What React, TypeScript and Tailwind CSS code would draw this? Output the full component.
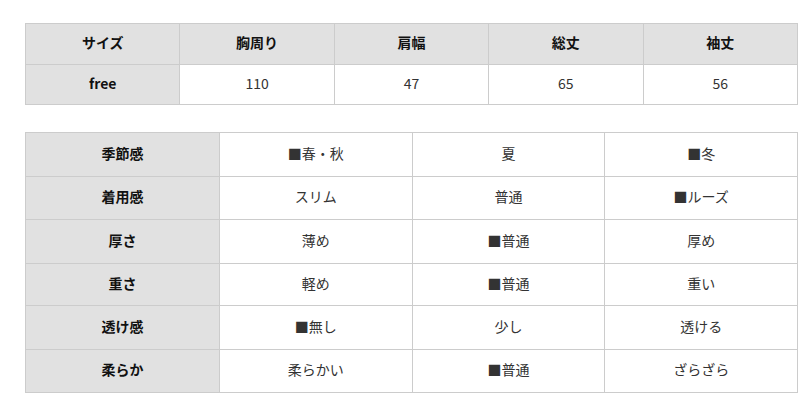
const sizeHead = ["サイズ", "胸周り", "肩幅", "総丈", "袖丈"]
const sizeRow = ["free", "110", "47", "65", "56"]

const feelRows: { label: string; values: string[]; h: string }[] = [
  { label: "季節感", values: ["■春・秋", "夏", "■冬"], h: "h-[44px]" },
  { label: "着用感", values: ["スリム", "普通", "■ルーズ"], h: "h-[43px]" },
  { label: "厚さ", values: ["薄め", "■普通", "厚め"], h: "h-[44px]" },
  { label: "重さ", values: ["軽め", "■普通", "重い"], h: "h-[42px]" },
  { label: "透け感", values: ["■無し", "少し", "透ける"], h: "h-[44px]" },
  { label: "柔らか", values: ["柔らかい", "■普通", "ざらざら"], h: "h-[43px]" },
]

export default function App() {
  return (
    <div
      className="w-[812px] h-[408px] bg-white pl-[25px] pt-[23px]"
      style={{ fontFamily: '"Noto Sans CJK JP", "Noto Sans", sans-serif' }}
    >
      {/* Size table */}
      <table className="w-[773px] table-fixed border-collapse text-[14px]">
        <tbody>
          <tr className="h-[41px]">
            {sizeHead.map((t) => (
              <th key={t} className="border border-[#cccccc] bg-[#e1e1e1] pb-[4px] font-bold text-center text-[#111]">
                {t}
              </th>
            ))}
          </tr>
          <tr className="h-[40px]">
            {sizeRow.map((t, i) => (
              <td
                key={i}
                className={`border border-[#cccccc] pb-[3px] text-center ${i === 0 ? "bg-[#e1e1e1] font-bold text-[#111]" : "bg-white text-[#333]"}`}
              >
                {t}
              </td>
            ))}
          </tr>
        </tbody>
      </table>

      {/* Feel table */}
      <table className="mt-[27px] w-[773px] table-fixed border-collapse text-[14px]">
        <tbody>
          {feelRows.map((r) => (
            <tr key={r.label} className={r.h}>
              <th className="w-[194px] border border-[#cccccc] bg-[#e1e1e1] pb-[3px] font-bold text-center text-[#111]">
                {r.label}
              </th>
              {r.values.map((v, i) => (
                <td key={i} className="border border-[#cccccc] bg-white pb-[3px] text-center text-[#333]">
                  {v}
                </td>
              ))}
            </tr>
          ))}
        </tbody>
      </table>
    </div>
  )
}
